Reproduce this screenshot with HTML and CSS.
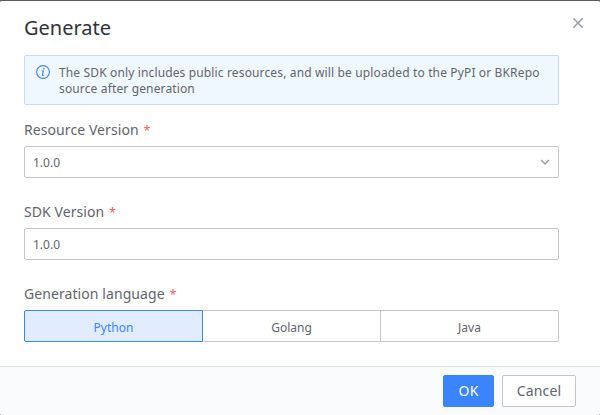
FILE: index.html
```
<!DOCTYPE html>
<html lang="en">
<head>
<meta charset="utf-8">
<title>Generate</title>
<link rel="stylesheet" href="styles.css">
</head>
<body>
<div class="dialog">
  <header class="head">
    <h1 class="title">Generate</h1>
    <svg class="close" viewBox="0 0 12 12"><path d="M1.3 1.3l9.4 9.4M10.7 1.3l-9.4 9.4"/></svg>
  </header>
  <main class="body">
    <div class="alert">
      <svg class="info" viewBox="0 0 14 14"><circle cx="7" cy="7" r="6.4"/><path d="M5.7 6h1.6l-1 4.2q0 .5 1.5-.2"/><path class="dot" d="M7.2 3.1h1.3v1.3H7.2z"/></svg>
      <p class="message">The SDK only includes public resources, and will be uploaded to the PyPI or BKRepo<br>source after generation</p>
    </div>
    <div class="field">
      <div class="label">Resource Version<span class="star">*</span></div>
      <div class="control"><span>1.0.0</span><svg class="chevron" viewBox="0 0 10 6"><path d="M1 1l4 4 4-4"/></svg></div>
    </div>
    <div class="field">
      <div class="label">SDK Version<span class="star">*</span></div>
      <div class="control"><span>1.0.0</span></div>
    </div>
    <div class="field">
      <div class="label">Generation language<span class="star">*</span></div>
      <div class="group">
        <div class="option selected">Python</div>
        <div class="option">Golang</div>
        <div class="option">Java</div>
      </div>
    </div>
  </main>
  <footer class="foot">
    <div class="button primary">OK</div>
    <div class="button">Cancel</div>
  </footer>
</div>
</body>
</html>
```
FILE: styles.css
```
* { box-sizing: border-box; }
body { margin: 0; background: #5b5b5b; font-family: "Noto Sans", sans-serif; color: #63656e; }
.dialog { height: 415px; background: #fff; border-top: 1px solid #5b5b5b; border-radius: 2px; display: flex; flex-direction: column; overflow: hidden; }
.head { display: flex; justify-content: space-between; height: 54px; padding: 12px 16px 0 24px; }
.title { margin: 0; font-size: 20px; line-height: 30px; font-weight: 400; color: #313238; }
.close { width: 12px; height: 12px; margin-top: 4px; fill: none; stroke: #979ba5; stroke-width: 1.5; }
.body { flex: 1; padding: 0 41px 0 24px; }
.alert { display: flex; height: 50px; padding: 9px 11px 0; background: #f0f8ff; border: 1px solid #c5daff; border-radius: 2px; }
.info { flex: none; width: 14px; height: 14px; margin-right: 9px; fill: none; stroke: #3a84ff; stroke-width: 1.1; }
.info .dot { fill: #3a84ff; stroke: none; }
.message { margin: 0; font-size: 12px; line-height: 16px; letter-spacing: 0.14px; white-space: nowrap; }
.field { height: 82px; padding-top: 9px; }
.label { height: 32px; font-size: 14px; line-height: 32px; letter-spacing: 0.08px; white-space: nowrap; }
.star { margin-left: 5px; font-size: 12px; color: #ff5656; }
.control { display: flex; align-items: center; justify-content: space-between; height: 32px; padding: 0 8px; border: 1px solid #c4c6cc; border-radius: 2px; font-size: 12px; }
.chevron { width: 10px; height: 6px; fill: none; stroke: #979ba5; stroke-width: 1.3; }
.group { display: flex; height: 32px; border: 1px solid #c4c6cc; border-radius: 2px; }
.option { flex: 1; font-size: 12px; line-height: 34px; text-align: center; border-left: 1px solid #c4c6cc; }
.option.selected { margin: -1px 0; border: 1px solid #3a84ff; margin-left: -1px; border-radius: 2px 0 0 2px; background: #e1ecff; color: #3a84ff; }
.selected + .option { border-left: 0; }
.foot { display: flex; gap: 8px; justify-content: flex-end; height: 49px; padding: 8px 24px 0 0; border-top: 1px solid #dcdee5; background: #fafbfd; }
.button { width: 74px; height: 32px; border: 1px solid #c4c6cc; border-radius: 2px; background: #fff; font-size: 14px; line-height: 30px; letter-spacing: 0.15px; text-align: center; }
.button.primary { width: 51px; border-color: #3a84ff; background: #3a84ff; color: #fff; }
```
